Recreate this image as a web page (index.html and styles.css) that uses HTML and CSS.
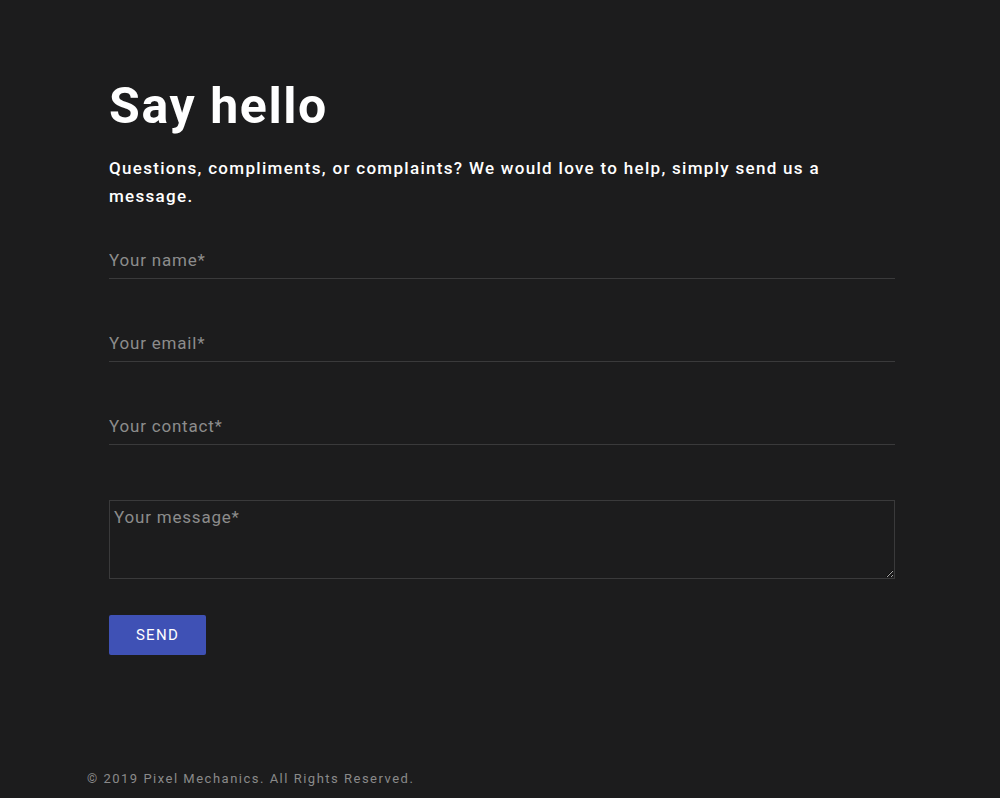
FILE: index.html
```html
<!DOCTYPE html>
<html lang="en">
<head>
    <meta charset="UTF-8">
    <meta name="viewport" content="width=device-width, initial-scale=1.0">
    <title>Say hello</title>
    <link rel="stylesheet" href="styles.css">
</head>
<body>
    <main class="contact">
        <h1>Say hello</h1>
        <p class="intro">Questions, compliments, or complaints? We would love to help, simply send us a message.</p>

        <form class="contact-form">
            <input type="text" class="field" placeholder="Your name*">
            <input type="email" class="field" placeholder="Your email*">
            <input type="text" class="field" placeholder="Your contact*">
            <textarea class="message" placeholder="Your message*"></textarea>
            <button type="button" class="send">Send</button>
        </form>
    </main>

    <footer class="footer">&copy; 2019 Pixel Mechanics. All Rights Reserved.</footer>
</body>
</html>
```

FILE: styles.css
```css
html, body {
    margin: 0;
    padding: 0;
    background-color: #1c1c1d;
    font-family: Roboto, "Noto Sans", sans-serif;
    color: #ffffff;
}

body {
    min-height: 798px;
    display: flex;
    flex-direction: column;
}

.contact {
    width: 786px;
    margin: 0 auto 0 109px;
    padding-top: 76px;
}

h1 {
    margin: 0;
    font-size: 50px;
    font-weight: 700;
    line-height: 60px;
    letter-spacing: 1.6px;
}

.intro {
    margin: 18px 0 0;
    font-size: 17px;
    font-weight: 500;
    line-height: 28px;
    letter-spacing: 1.3px;
    width: 750px;
}

.contact-form {
    display: flex;
    flex-direction: column;
    margin-top: 34px;
}

.field {
    background: transparent;
    border: none;
    border-bottom: 1px solid #3a3a3b;
    color: #ffffff;
    font-family: inherit;
    font-size: 17px;
    letter-spacing: 0.8px;
    padding: 6px 0 8px;
    margin-bottom: 48px;
    outline: none;
}

.field::placeholder,
.message::placeholder {
    color: #8c8c8c;
}

.message {
    background: transparent;
    border: 1px solid #3a3a3b;
    color: #ffffff;
    font-family: inherit;
    font-size: 17px;
    letter-spacing: 0.8px;
    height: 79px;
    padding: 6px 4px;
    box-sizing: border-box;
    margin-top: 7px;
    resize: vertical;
    outline: none;
}

.send {
    align-self: flex-start;
    margin-top: 36px;
    width: 97px;
    height: 40px;
    background-color: #3f51b5;
    color: #ffffff;
    border: none;
    border-radius: 2px;
    font-family: inherit;
    font-size: 15px;
    font-weight: 400;
    letter-spacing: 1.3px;
    text-transform: uppercase;
    cursor: pointer;
}

.footer {
    margin-top: auto;
    padding: 0 0 12px 87px;
    font-size: 13px;
    letter-spacing: 1.5px;
    color: #8a8a8a;
}
```
